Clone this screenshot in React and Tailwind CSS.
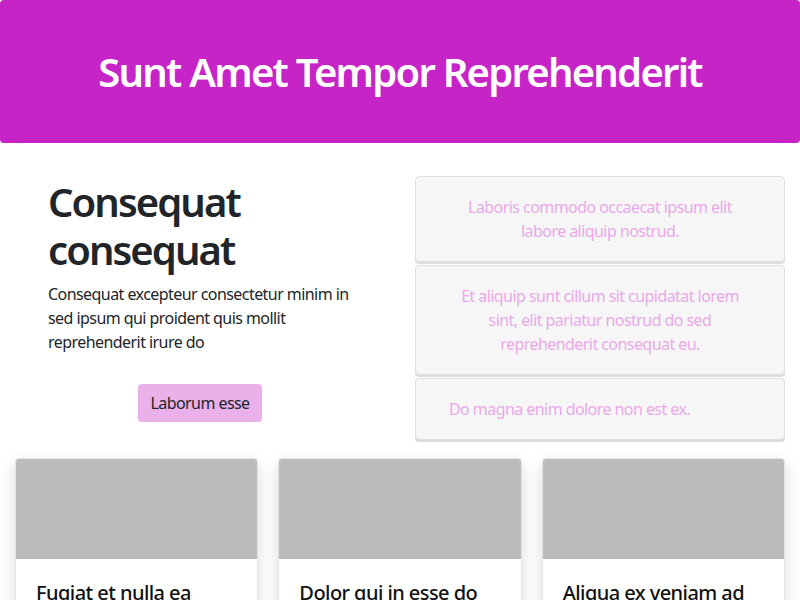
const boxes = [
  { text: "Laboris commodo occaecat ipsum elit labore aliquip nostrud.", align: "text-center" },
  { text: "Et aliquip sunt cillum sit cupidatat lorem sint, elit pariatur nostrud do sed reprehenderit consequat eu.", align: "text-center" },
  { text: "Do magna enim dolore non est ex.", align: "text-left" },
];

const cards = [
  { title: "Fugiat et nulla ea", body: "Eiusmod proident minim cillum nulla sint." },
  { title: "Dolor qui in esse do", body: "Sunt ullamco anim velit consequat est." },
  { title: "Aliqua ex veniam ad", body: "Cillum laboris do ipsum fugiat irure." },
];

const App = () => {
  return (
    <div className="min-h-screen bg-white text-[#212529] font-['Noto_Sans',sans-serif] text-base leading-6 tracking-[-0.035em]">
      <header className="h-[143px] bg-[#c724c7] rounded flex items-center justify-center">
        <h1 className="text-[40px] leading-[48px] font-semibold tracking-[-0.044em] text-white">Sunt Amet Tempor Reprehenderit</h1>
      </header>

      <section className="grid grid-cols-2 mt-[33px]">
        <div className="pl-12 pr-[40px] pt-[2px]">
          <h2 className="text-[40px] leading-[48px] font-semibold tracking-[-0.048em] mb-2">Consequat consequat</h2>
          <p className="mb-[30px]">Consequat excepteur consectetur minim in sed ipsum qui proident quis mollit reprehenderit irure do</p>
          <div className="flex justify-center pr-2">
            <button className="bg-[#e9b0e9] text-[#212529] rounded px-3 py-[7px] leading-6">Laborum esse</button>
          </div>
        </div>
        <div className="px-[15px] flex flex-col gap-[3px]">
          {boxes.map((b) => (
            <div key={b.text} className={`bg-[#f6f6f6] border border-[#dedede] rounded shadow-[0_2px_0_#dcdcdc] px-[33px] py-[18px] text-[#eaa8ea] ${b.align}`}>
              {b.text}
            </div>
          ))}
        </div>
      </section>

      <section className="grid grid-cols-3 gap-5 px-[15px] mt-[18px] pb-10">
        {cards.map((c) => (
          <div key={c.title} className="bg-white rounded border border-[#e4e4e4] shadow-[0_6px_16px_rgba(0,0,0,0.15)] overflow-hidden">
            <div className="h-[100px] bg-[#bbbbbb]"></div>
            <div className="px-5 pt-5 pb-6">
              <h3 className="text-xl font-medium text-[#111] mb-2">{c.title}</h3>
              <p className="text-[#212529]">{c.body}</p>
            </div>
          </div>
        ))}
      </section>
    </div>
  );
};

export default App;
